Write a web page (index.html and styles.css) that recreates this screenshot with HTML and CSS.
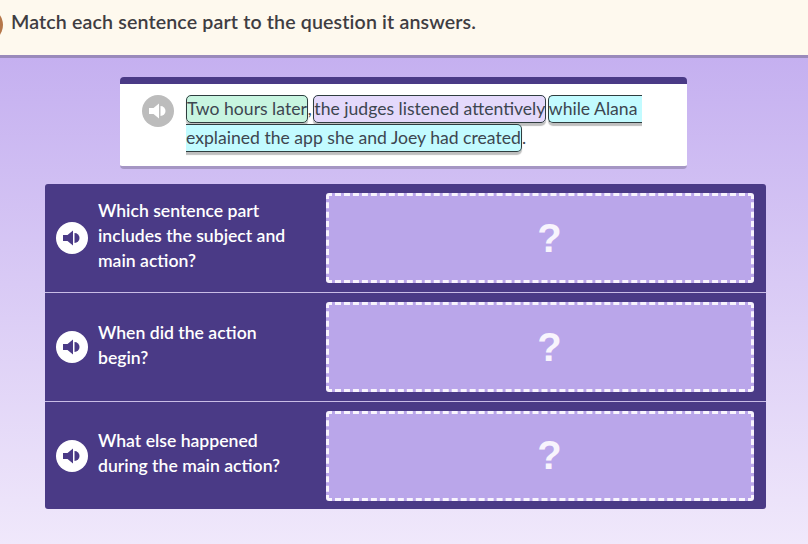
FILE: index.html
```html
<!DOCTYPE html>
<html lang="en">
<head>
  <meta charset="UTF-8">
  <meta name="viewport" content="width=device-width, initial-scale=1.0">
  <title>Match sentence parts</title>
  <link rel="stylesheet" href="styles.css">
</head>
<body>
  <svg class="defs" width="0" height="0" aria-hidden="true">
    <symbol id="speaker" viewBox="0 0 20 20">
      <path d="M1 7h4.500L11 2.500v15L5.500 13H1z"/>
      <path d="M12.500 5a5 5 0 0 1 0 10z"/>
    </symbol>
  </svg>

  <!-- Instructions -->
  <header class="top-bar">
    <span class="avatar"></span>
    <h1>Match each sentence part to the question it answers.</h1>
  </header>

  <main class="content">
    <!-- Sentence -->
    <section class="sentence-card">
      <span class="audio audio-grey"><svg><use href="#speaker"/></svg></span>
      <p class="sentence"><span class="part part-green">Two hours later</span>, <span class="part part-purple">the judges listened attentively</span> <span class="part part-blue">while Alana&nbsp; explained the app she and Joey had created</span>.</p>
    </section>

    <!-- Matching table -->
    <section class="match-table">
      <div class="row">
        <div class="question">
          <span class="audio audio-white"><svg><use href="#speaker"/></svg></span>
          <p>Which sentence part includes the subject and main action?</p>
        </div>
        <div class="drop-zone">?</div>
      </div>
      <div class="row">
        <div class="question">
          <span class="audio audio-white"><svg><use href="#speaker"/></svg></span>
          <p>When did the action begin?</p>
        </div>
        <div class="drop-zone">?</div>
      </div>
      <div class="row">
        <div class="question">
          <span class="audio audio-white"><svg><use href="#speaker"/></svg></span>
          <p>What else happened during the main action?</p>
        </div>
        <div class="drop-zone">?</div>
      </div>
    </section>
  </main>
</body>
</html>
```

FILE: styles.css
```css
html, body {
  height: 100%;
}
body {
  margin: 0;
  overflow: hidden;
  font-family: "Lato", "Open Sans", sans-serif;
  background: linear-gradient(#c5b0f0 58px, #f0e8fb 100%);
  color: #3d3d46;
}
.defs {
  position: absolute;
}
.top-bar {
  height: 55px;
  display: flex;
  align-items: center;
  gap: 8px;
  background: #fef9ee;
  border-bottom: 3px solid #9a8abb;
  overflow: hidden;
  margin-bottom: -1px;
}
.top-bar h1 {
  margin: 0 0 12px;
  font-size: 19.600px;
  font-weight: 600;
  letter-spacing: 0.14px;
  color: #3f3d42;
}
.avatar {
  flex: none;
  width: 34px;
  height: 34px;
  margin-left: -31px;
  margin-bottom: 5px;
  border-radius: 50%;
  background: #b5774a;
}
.content {
  padding-top: 20px;
}
.sentence-card {
  box-sizing: border-box;
  width: 567px;
  height: 92px;
  margin: 0 0 15px 120px;
  padding: 10px 22px 0;
  display: flex;
  gap: 12px;
  background: #fff;
  border-top: 7px solid #4a3a86;
  border-bottom: 3px solid #a596c4;
  border-radius: 4px;
}
.audio {
  flex: none;
  width: 32px;
  height: 32px;
  display: flex;
  align-items: center;
  justify-content: center;
  border-radius: 50%;
}
.audio svg {
  width: 20px;
  height: 20px;
}
.audio-grey {
  margin-top: 1px;
  background: #bcbcbc;
  fill: #fff;
}
.audio-white {
  background: #fff;
  fill: #4a3a86;
}
.sentence {
  margin: 0;
  font-size: 17.600px;
  line-height: 29px;
  word-spacing: -3px;
  color: #3d4650;
}
.part {
  padding: 2px 0 3px 0;
  border: 1px solid #2f3d3f;
  border-radius: 5px;
  box-shadow: 0 3px 1px rgba(0, 0, 0, 0.25);
  word-spacing: 0;
}
.part-green {
  background: #c8f5e0;
}
.part-purple {
  background: #e4d9fb;
}
.part-blue {
  background: #c2fbff;
}
.match-table {
  box-sizing: border-box;
  width: 721px;
  height: 325px;
  margin-left: 45px;
  background: #4a3a86;
  border-radius: 3px;
}
.row {
  box-sizing: border-box;
  height: 109px;
  display: flex;
  align-items: center;
  padding: 0 11px;
  border-bottom: 1px solid #c9bce6;
}
.row:last-child {
  border-bottom: 0;
  height: 107px;
}
.question {
  width: 270px;
  display: flex;
  align-items: center;
  gap: 10px;
  color: #fff;
  font-size: 17.600px;
  font-weight: 600;
  line-height: 25px;
}
.question p {
  margin: 0 0 5px;
  width: 195px;
}
.drop-zone {
  box-sizing: border-box;
  flex: none;
  width: 428px;
  height: 90px;
  display: flex;
  align-items: center;
  justify-content: center;
  padding-left: 19px;
  background: #baa6ea;
  border: 3px dashed #f8f4fd;
  border-radius: 3px;
  color: #f8f4fd;
  font-family: "Liberation Sans", sans-serif;
  font-size: 40px;
  font-weight: 700;
}
```
